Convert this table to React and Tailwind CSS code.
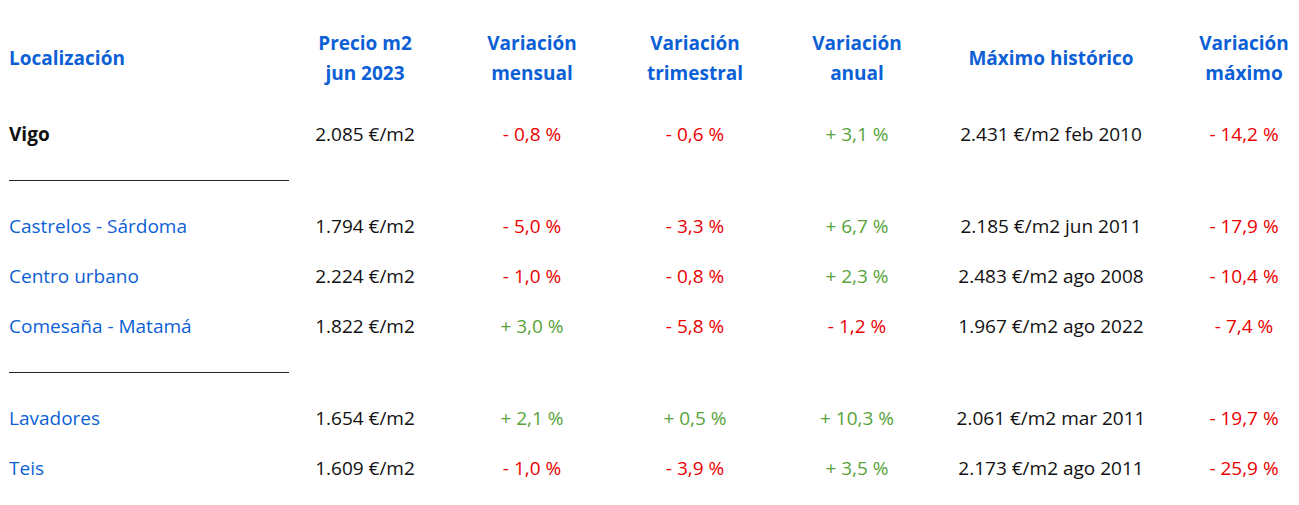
import React from 'react';

const cols = 'grid grid-cols-[289px_152px_182px_144px_180px_208px_178px] w-[1333px]';

const rows = [
  { name: 'Vigo', bold: true, price: '2.085 €/m2', m: '- 0,8 %', t: '- 0,6 %', a: '+ 3,1 %', max: '2.431 €/m2 feb 2010', vm: '- 14,2 %' },
  'sep',
  { name: 'Castrelos - Sárdoma', price: '1.794 €/m2', m: '- 5,0 %', t: '- 3,3 %', a: '+ 6,7 %', max: '2.185 €/m2 jun 2011', vm: '- 17,9 %' },
  { name: 'Centro urbano', price: '2.224 €/m2', m: '- 1,0 %', t: '- 0,8 %', a: '+ 2,3 %', max: '2.483 €/m2 ago 2008', vm: '- 10,4 %' },
  { name: 'Comesaña - Matamá', price: '1.822 €/m2', m: '+ 3,0 %', t: '- 5,8 %', a: '- 1,2 %', max: '1.967 €/m2 ago 2022', vm: '- 7,4 %' },
  'sep',
  { name: 'Lavadores', price: '1.654 €/m2', m: '+ 2,1 %', t: '+ 0,5 %', a: '+ 10,3 %', max: '2.061 €/m2 mar 2011', vm: '- 19,7 %' },
  { name: 'Teis', price: '1.609 €/m2', m: '- 1,0 %', t: '- 3,9 %', a: '+ 3,5 %', max: '2.173 €/m2 ago 2011', vm: '- 25,9 %' },
];

// green for positive, red for negative
const Pct = ({ v }) => (
  <div className={`flex items-center justify-center ${v.startsWith('+') ? 'text-[#58a33a]' : 'text-[#ea0000]'}`}>{v}</div>
);

const Head = ({ children }) => (
  <div className="flex items-center justify-center text-center font-bold text-[#0d5fd6] leading-[30px]">{children}</div>
);

export default function App() {
  return (
    <div className="w-full h-[505px] overflow-hidden bg-white font-['Open_Sans',sans-serif] text-[19px] text-[#111]">
      <div className={`${cols} pt-[28px] h-[109px] items-start`}>
        <div className="h-[60px] flex items-center pl-[9px] font-bold text-[#0d5fd6]">Localización</div>
        <Head>Precio m2<br />jun 2023</Head>
        <Head>Variación<br />mensual</Head>
        <Head>Variación<br />trimestral</Head>
        <Head>Variación<br />anual</Head>
        <div className="h-[60px] flex items-center justify-center font-bold text-[#0d5fd6]">Máximo histórico</div>
        <Head>Variación<br />máximo</Head>
      </div>
      {rows.map((r, i) =>
        r === 'sep' ? (
          <div key={i} className="h-[42px] flex items-center pl-[9px]">
            <div className="w-[280px] border-t border-[#222]" />
          </div>
        ) : (
          <div key={i} className={`${cols} h-[50px]`}>
            <div className={`flex items-center pl-[9px] ${r.bold ? 'font-bold text-[#111]' : 'text-[#0d5fd6]'}`}>{r.name}</div>
            <div className="flex items-center justify-center">{r.price}</div>
            <Pct v={r.m} />
            <Pct v={r.t} />
            <Pct v={r.a} />
            <div className="flex items-center justify-center">{r.max}</div>
            <Pct v={r.vm} />
          </div>
        )
      )}
    </div>
  );
}
